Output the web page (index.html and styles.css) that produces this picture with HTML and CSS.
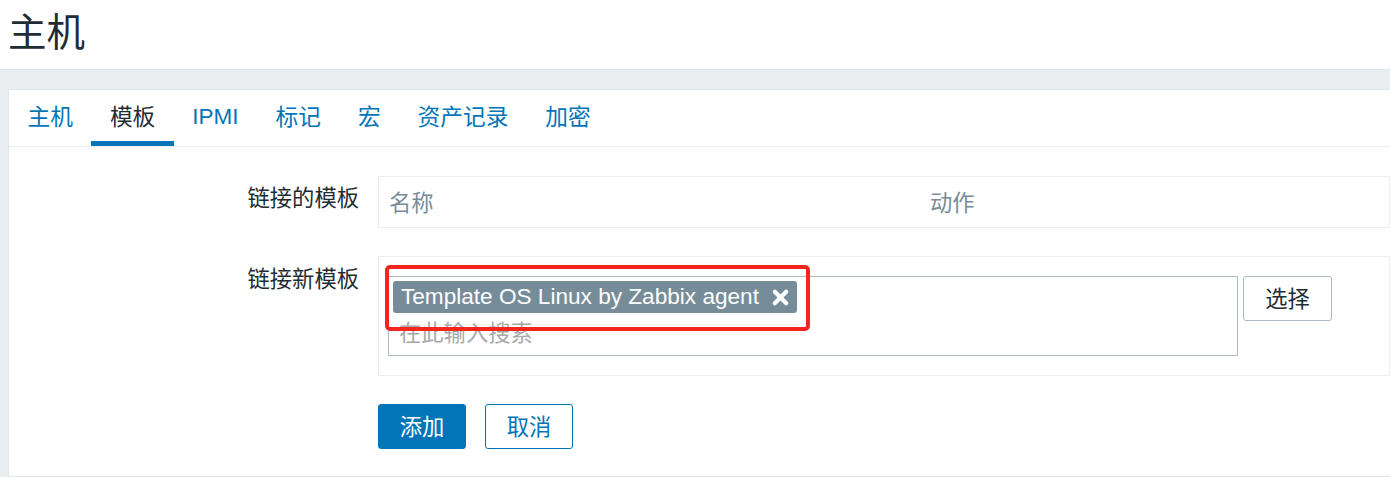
FILE: index.html
```html
<!DOCTYPE html>
<html lang="zh">
<head>
<meta charset="utf-8">
<title>主机</title>
<link rel="stylesheet" href="styles.css">
</head>
<body>
<header class="page-header">
  <h1 class="page-title">主机</h1>
</header>
<main class="wrap">
  <section class="panel">
    <nav class="tabs">
      <a class="tab">主机</a>
      <a class="tab active">模板</a>
      <a class="tab latin">IPMI</a>
      <a class="tab">标记</a>
      <a class="tab">宏</a>
      <a class="tab">资产记录</a>
      <a class="tab">加密</a>
    </nav>
    <div class="form">
      <div class="row">
        <label class="label">链接的模板</label>
        <div class="field">
          <div class="table-box">
            <span class="th th-name">名称</span>
            <span class="th">动作</span>
          </div>
        </div>
      </div>
      <div class="row">
        <label class="label">链接新模板</label>
        <div class="field">
          <div class="sep-box">
            <div class="ms-line">
              <div class="multiselect">
                <div class="chips">
                  <span class="chip">Template OS Linux by Zabbix agent
                    <svg class="chip-x" viewBox="0 0 20 20" width="19" height="19" aria-hidden="true">
                      <path d="M4 4 L16 16 M16 4 L4 16" stroke="#fff" stroke-width="4.4" stroke-linecap="round"/>
                    </svg>
                  </span>
                </div>
                <div class="placeholder">在此输入搜索</div>
                <div class="highlight"></div>
              </div>
              <button class="btn-alt">选择</button>
            </div>
          </div>
        </div>
      </div>
      <div class="row">
        <span class="label"></span>
        <div class="field actions">
          <button class="btn-primary">添加</button>
          <button class="btn-outline">取消</button>
        </div>
      </div>
    </div>
  </section>
</main>
</body>
</html>
```
FILE: styles.css
```css
* { box-sizing: border-box; }
html, body {
  margin: 0;
  padding: 0;
  height: 100%;
  overflow: hidden;
  background: #ebeef0;
  font-family: "Liberation Sans", "Noto Sans CJK SC", sans-serif;
  color: #1f2c33;
}
.page-header {
  height: 70px;
  background: #fff;
  border-bottom: 1px solid #dfe4e7;
  padding: 0 0 0 8px;
}
.page-title {
  margin: 0;
  padding-top: 3px;
  font-family: "Noto Sans CJK SC", sans-serif;
  font-weight: 400;
  font-size: 38.5px;
  line-height: 52px;
  color: #1f2c33;
}
.wrap {
  padding: 19px 0 0 8px;
}
.panel {
  width: 1420px;
  height: 388px;
  background: #fff;
  border: 1px solid #dfe4e7;
}
.tabs {
  display: flex;
  height: 57px;
  border-bottom: 1px solid #ebeef0;
}
.tab {
  display: flex;
  align-items: center;
  padding: 0 18.5px 0 18.5px;
  height: 56px;
  font-family: "Noto Sans CJK SC", sans-serif;
  font-size: 22.7px;
  color: #0275b8;
  border-bottom: 5px solid transparent;
  padding-top: 0;
}
.tab.latin {
  font-family: "Liberation Sans", sans-serif;
  font-size: 22.5px;
  padding-top: 3px;
}
.tab.active {
  color: #1f2c33;
  border-bottom-color: #0275b8;
}
.form {
  padding-top: 29px;
  display: flex;
  flex-direction: column;
  gap: 28px;
}
.row {
  display: grid;
  grid-template-columns: 350px 1012px;
  column-gap: 19px;
  align-items: start;
}
.label {
  text-align: right;
  font-family: "Noto Sans CJK SC", sans-serif;
  font-size: 22.3px;
  line-height: 30px;
  padding-top: 5px;
  color: #1f2c33;
}
.row:nth-child(2) .label { padding-top: 6px; }
.table-box {
  display: flex;
  height: 52px;
  border: 1px solid #ebeef0;
  align-items: center;
  padding-left: 10px;
  padding-bottom: 3px;
}
.th {
  font-family: "Noto Sans CJK SC", sans-serif;
  font-size: 22.3px;
  color: #768d99;
}
.th-name { width: 541px; }
.sep-box {
  height: 120px;
  border: 1px solid #ebeef0;
  padding: 19px 9px 0 9px;
}
.ms-line {
  display: flex;
  gap: 5px;
  align-items: flex-start;
}
.multiselect {
  position: relative;
  width: 850px;
  height: 80px;
  border: 1px solid #acbbc2;
  padding: 4px 4px 0 4px;
}
.chips { display: flex; }
.chip {
  display: inline-flex;
  align-items: center;
  gap: 12px;
  height: 32px;
  padding: 0 7px 0 8px;
  background: #768d99;
  color: #fff;
  border-radius: 3px;
  font-family: "Liberation Sans", sans-serif;
  font-size: 22.6px;
}
.chip-x { display: block; margin-top: 1px; }
.placeholder {
  padding: 3px 0 0 6px;
  font-family: "Noto Sans CJK SC", sans-serif;
  font-size: 22.3px;
  line-height: 30px;
  color: #a6a9ab;
}
.highlight {
  position: absolute;
  left: -4px;
  top: -12px;
  width: 425px;
  height: 66px;
  border: 4px solid #f5241c;
  border-radius: 5px;
  pointer-events: none;
}
.btn-alt {
  width: 89px;
  height: 45px;
  background: #fff;
  border: 1px solid #acbbc2;
  border-radius: 3px;
  font-family: "Noto Sans CJK SC", sans-serif;
  font-size: 22.3px;
  color: #1f2c33;
  padding: 0 0 3px 0;
}
.actions {
  display: flex;
  gap: 19px;
  padding-top: 0;
}
.btn-primary, .btn-outline {
  width: 88px;
  height: 45px;
  border-radius: 3px;
  font-family: "Noto Sans CJK SC", sans-serif;
  font-size: 22.3px;
  padding: 0 0 3px 0;
}
.btn-primary {
  background: #0275b8;
  border: 1px solid #0275b8;
  color: #fff;
}
.btn-outline {
  background: #fff;
  border: 1px solid #0275b8;
  color: #0275b8;
}
```
